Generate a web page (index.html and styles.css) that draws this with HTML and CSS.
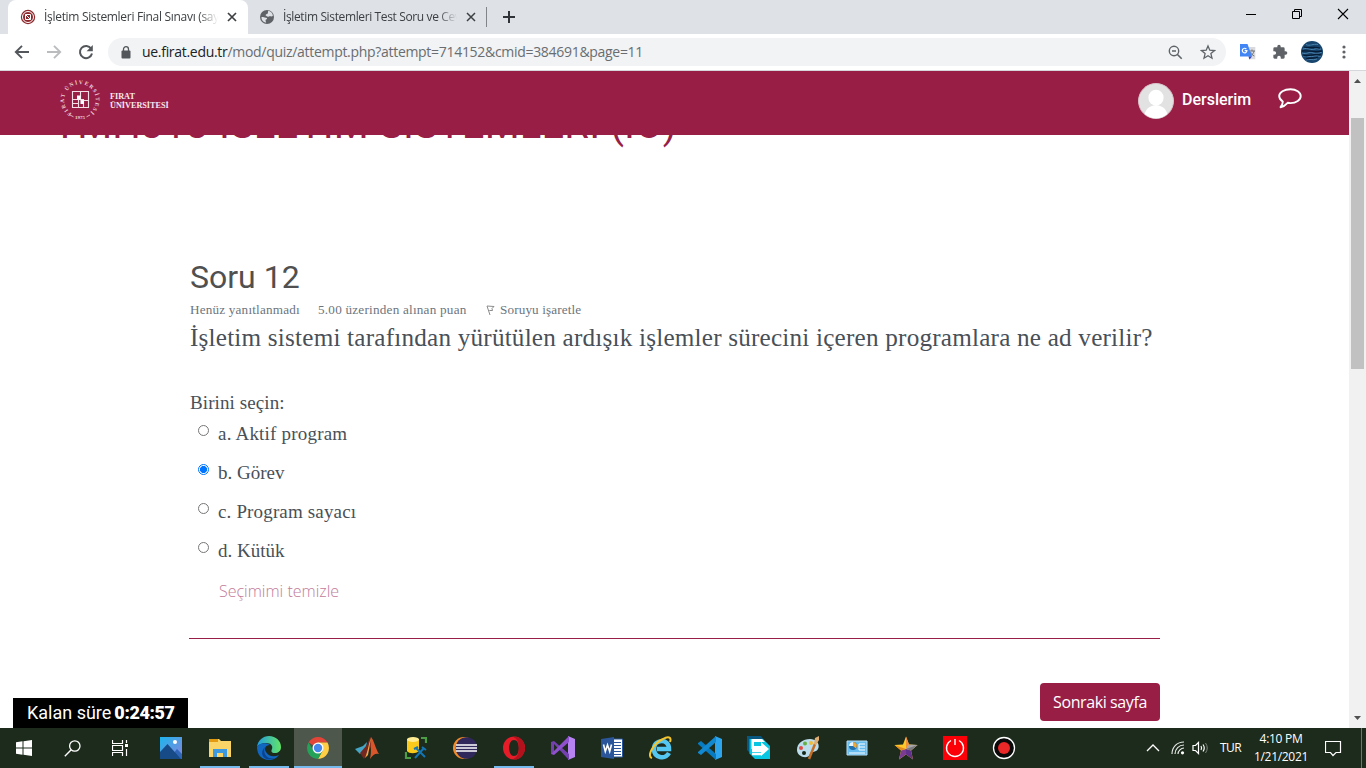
FILE: index.html
```html
<!DOCTYPE html>
<html lang="tr">
<head>
<meta charset="utf-8">
<title>İşletim Sistemleri Final Sınavı</title>
<link rel="stylesheet" href="styles.css">
</head>
<body>
<div class="tabs">
  <div class="tab active">
    <svg class="fav" width="16" height="16" viewBox="0 0 16 16"><circle cx="8" cy="8" r="7.200" fill="#8e2a2e"/><circle cx="8" cy="8" r="5.500" fill="none" stroke="#fff" stroke-width="1"/><path d="M5.500 5.500h5v5h-5zM5.500 5.500l5 5" fill="none" stroke="#fff" stroke-width="1"/></svg>
    <span class="tab-title t1">İşletim Sistemleri Final Sınavı (say</span>
    <svg class="close" width="12" height="12" viewBox="0 0 12 12"><path d="M2 2l8 8M10 2l-8 8" stroke="#3c4043" stroke-width="1.700"/></svg>
  </div>
  <div class="tab second">
    <svg class="fav" width="16" height="16" viewBox="0 0 16 16"><circle cx="8" cy="8" r="7" fill="#5f6368"/><path d="M2.500 8c1.800-.2 2.600.7 4.500.7 1.700 0 1.200 1.600 0 1.900-.9.300-.2 2.200.2 3-3-.2-5-2.700-4.700-5.600zM9.500 1.800c2.500.6 4.200 2.600 4.400 5-1.200 1.400-2.700-.2-4.100.8-1.600.8-2-.8-3.300-1.300.4-1.500 2.300-.8 2.400-2.200.1-.8 0-1.700.6-2.300z" fill="#dee1e6"/></svg>
    <span class="tab-title t2">İşletim Sistemleri Test Soru ve Cev</span>
    <svg class="close" width="12" height="12" viewBox="0 0 12 12"><path d="M2 2l8 8M10 2l-8 8" stroke="#3c4043" stroke-width="1.500"/></svg>
  </div>
  <i class="tab-sep"></i>
  <svg class="plus" width="14" height="14" viewBox="0 0 14 14"><path d="M7 1v12M1 7h12" stroke="#303438" stroke-width="2"/></svg>
  <div class="win">
    <svg width="12" height="12" viewBox="0 0 12 12"><path d="M1 6.500h10" stroke="#000"/></svg>
    <svg width="12" height="12" viewBox="0 0 12 12"><path d="M1.500 3.500h7v7h-7zM3.500 3.500v-2h7v7h-2" fill="none" stroke="#000"/></svg>
    <svg width="12" height="12" viewBox="0 0 12 12"><path d="M1 1l10 10M11 1L1 11" stroke="#000" stroke-width="1.100"/></svg>
  </div>
</div>
<div class="toolbar">
  <svg class="nav" width="16" height="16" viewBox="0 0 16 16"><path d="M15 8H2M8 1.800L1.800 8 8 14.200" fill="none" stroke="#53575b" stroke-width="1.900"/></svg>
  <svg class="nav" width="16" height="16" viewBox="0 0 16 16"><path d="M1 8h13M8 1.800L14.200 8 8 14.200" fill="none" stroke="#babcbe" stroke-width="1.900"/></svg>
  <svg class="nav" width="16" height="16" viewBox="0 0 16 16"><path d="M13.200 4.700A6.100 6.100 0 1 0 14 9.500" fill="none" stroke="#53575b" stroke-width="2"/><path d="M14.800 1v6.200H8.600z" fill="#53575b"/></svg>
  <div class="omni">
    <svg width="10" height="13" viewBox="0 0 10 13"><rect x=".5" y="4.500" width="9" height="8" rx="1" fill="#53575b"/><path d="M2.500 5V3.200a2.500 2.500 0 0 1 5 0V5" fill="none" stroke="#53575b" stroke-width="1.300"/></svg>
    <span class="url"><b>ue.firat.edu.tr</b>/mod/quiz/attempt.php?attempt=714152&amp;cmid=384691&amp;page=11</span>
    <svg class="mag" width="15" height="15" viewBox="0 0 15 15"><circle cx="6" cy="6" r="4.700" fill="none" stroke="#5f6368" stroke-width="1.400"/><path d="M4 6h4M9.200 9.200l4.500 4.500" stroke="#5f6368" stroke-width="1.600"/></svg>
    <svg width="16" height="16" viewBox="0 0 16 16"><path d="M8 1.900l1.800 4.300 4.700.4-3.600 3 1.100 4.600L8 11.800l-4 2.400 1.100-4.600-3.600-3 4.700-.4z" fill="none" stroke="#5f6368" stroke-width="1.300"/></svg>
  </div>
  <svg class="gt" width="16" height="16" viewBox="0 0 16 16"><path d="M7 3h8.300v12.300H9z" fill="#d8dadd"/><path d="M9.500 7h5.500M12 5.500V7M14 7c-.5 2.500-2 3.800-3.500 4.800M10.500 8c.8 2 2 3.200 3.800 4" stroke="#70757a" fill="none"/><path d="M0 0h7.500L12 12.500H0z" fill="#4285f4"/><path d="M8.500 12.500H12l-2.500 3z" fill="#3442c4"/><path d="M6.300 5A2.300 2.300 0 1 0 6.900 6.700H4.700" fill="none" stroke="#fff" stroke-width="1.200"/></svg>
  <svg class="puz" width="16" height="16" viewBox="0 0 24 24"><path d="M20.500 11H19V7a2 2 0 0 0-2-2h-4V3.500a2.500 2.500 0 0 0-5 0V5H4a2 2 0 0 0-2 2v3.800h1.500a2.700 2.700 0 0 1 0 5.400H2V20c0 1.100.9 2 2 2h3.800v-1.500a2.700 2.700 0 0 1 5.400 0V22H17a2 2 0 0 0 2-2v-4h1.500a2.500 2.500 0 0 0 0-5z" fill="#5f6368"/></svg>
  <svg class="ava" width="22" height="22" viewBox="0 0 22 22"><circle cx="11" cy="11" r="11" fill="#17456d"/><path d="M5 3.500c4 2 7-1 12 0M2 8c5-2 8 2 12 0 3-1 4 1 6 0M1 12c5 2 7-2 11 0 4 1 6 0 9-1M2 15c5-1 7 2 11 0 3-1 5 1 7 0M5 19c4-2 6 1 11-1" fill="none" stroke="#4c83ad" stroke-width="1"/><path d="M3 6c6 2 9-1 16 1M1 10c7-1 11 2 20 0M2 14c5 2 11-2 18 0M5 18c6-2 8 0 12-2" fill="none" stroke="#071c35" stroke-width="1.300"/></svg>
  <svg class="dots" width="4" height="14" viewBox="0 0 4 14"><g fill="#5f6368"><circle cx="2" cy="2" r="1.600"/><circle cx="2" cy="7" r="1.600"/><circle cx="2" cy="12" r="1.600"/></g></svg>
</div>
<div class="viewport">
  <div class="page">
    <header class="site">
      <svg class="seal" width="42" height="42" viewBox="0 0 42 42"><defs><path id="ring" d="M12.800 34.500A15.800 15.800 0 1 1 29.200 34.500"/></defs><text class="ring-text" textLength="79"><textPath href="#ring">FIRAT ÜNİVERSİTESİ</textPath></text><text class="year" x="21" y="39.800" text-anchor="middle">1975</text><path d="M11 36l3.500 1.800M31 36l-3.500 1.800" stroke="#e6c2ce" stroke-width=".9"/><path d="M13.500 12.500h16v16h-16zM21.500 12.500v8M13.500 20.500h11v8M29.500 21.500h-8M19.500 20.500v8M19.500 24.500h-6" fill="none" stroke="#f3dfe5" stroke-width="1.100"/><path d="M18 16.500h3.500v4H18zM21.500 21.500H25V25h-3.500z" fill="#fff"/></svg>
      <div class="brand"><span>FIRAT</span><span class="b2">ÜNİVERSİTESİ</span></div>
      <svg class="user" width="36" height="36" viewBox="0 0 36 36"><defs><clipPath id="uc"><circle cx="18" cy="18" r="17.300"/></clipPath></defs><circle cx="18" cy="18" r="17.500" fill="#e2e2e2" stroke="#d9c4cb"/><g clip-path="url(#uc)" fill="#fff"><ellipse cx="18" cy="14.700" rx="7.600" ry="8"/><path d="M6 36c0-9 5-13.500 12-14 7 .5 12 5 12 14z"/></g></svg>
      <span class="courses">Derslerim</span>
      <svg class="chat" width="24" height="21" viewBox="0 0 24 21"><path d="M12.500 1.200c5.800 0 10.200 3 10.200 6.900s-4.400 7-10.200 7c-1 0-1.900-.1-2.800-.3-2 2.200-4.300 3.900-7.200 4.400 1.600-1.600 2.300-3.300 2.300-5.600C2.800 12.300 1.200 10.400 1.200 8.100c0-3.900 4.900-6.900 11.300-6.900z" fill="none" stroke="#fff" stroke-width="1.900" stroke-linejoin="round"/></svg>
    </header>
    <h1><span>YMH313 İSLETİM SİSTEMLERİ (İÖ)</span></h1>
    <main class="question">
      <h2>Soru 12</h2>
      <div class="info"><span class="i1">Henüz yanıtlanmadı</span><span class="i2">5.00 üzerinden alınan puan</span><svg width="10" height="12" viewBox="0 0 10 12"><path d="M1 2l7 .5-2 2 .5 2H3.300M1 2l3 9" fill="none" stroke="#8a8c8e"/></svg><span class="i3">Soruyu işaretle</span></div>
      <p class="prompt">İşletim sistemi tarafından yürütülen ardışık işlemler sürecini içeren programlara ne ad verilir?</p>
      <div class="choose">Birini seçin:</div>
      <label class="opt"><i></i><span class="oa">a. Aktif program</span></label>
      <label class="opt"><i class="on"></i><span class="ob">b. Görev</span></label>
      <label class="opt"><i></i><span class="oc">c. Program sayacı</span></label>
      <label class="opt"><i></i><span class="od">d. Kütük</span></label>
      <a class="clear">Seçimimi temizle</a>
      <div class="next"><button>Sonraki sayfa</button></div>
    </main>
    <div class="timer"><span>Kalan süre</span><b>0:24:57</b></div>
  </div>
  <div class="scroll"><svg width="9" height="5" viewBox="0 0 9 5"><path d="M1 5l3.500-4L8 5z" fill="#505050"/></svg><i></i><svg width="9" height="5" viewBox="0 0 9 5"><path d="M1 0l3.500 4L8 0z" fill="#505050"/></svg></div>
</div>
<footer class="taskbar">
  <div class="sys"><svg width="16" height="16" viewBox="0 0 16 16"><path d="M0 2.200L6.500 1.300v6.200H0zM7.500 1.200L16 0v7.500H7.500zM0 8.500h6.500v6.200L0 13.800zM7.500 8.500H16V16l-8.500-1.200z" fill="#fff"/></svg></div>
  <div class="sys"><svg width="17" height="17" viewBox="0 0 17 17"><circle cx="10.800" cy="6" r="5.200" fill="none" stroke="#fff" stroke-width="1.300"/><path d="M7.200 9.800L.8 16.300" stroke="#fff" stroke-width="1.400"/></svg></div>
  <div class="sys"><svg width="17" height="16" viewBox="0 0 17 16"><path d="M.5 0v3.500h10V0M.5 16v-3.500h10V16M.5 5.500h10v5H.5zM14.500 0v3M14.500 9v7" fill="none" stroke="#fff" stroke-width="1.200"/><path d="M13 4h3v3h-3z" fill="#fff"/></svg></div>
  <div class="apps">
  <div><svg viewBox="0 0 24 24"><defs><linearGradient id="ph" x2="1" y2="1"><stop stop-color="#1cb5ec"/><stop offset="1" stop-color="#8b83dc"/></linearGradient></defs><path d="M1 1h22v22H1z" fill="url(#ph)"/><path d="M10 23l8-10 5 5v5z" fill="#2f66b8"/><path d="M1 16L8.500 8 22 23H1z" fill="#164b88"/><circle cx="16" cy="6" r="2" fill="#fff"/></svg></div>
  <div class="run"><svg viewBox="0 0 24 24"><path d="M1 3h10l2 2h10v16H1z" fill="#fbd468"/><path d="M1 3h9v3H1z" fill="#e39a10"/><path d="M5 21v-8h14v8h-4v-4H9v4z" fill="#3c99df"/></svg></div>
  <div class="run"><svg viewBox="0 0 24 24"><defs><linearGradient id="ed"><stop stop-color="#239ce0"/><stop offset="1" stop-color="#62e467"/></linearGradient></defs><path d="M0 11C1 4 6 0 12 0c7 0 12 5 12 11 0 4-3 6-6 6-4 0-4-2-3-4 1-3-1-6-6-6-4 0-7 1-9 4z" fill="url(#ed)"/><path d="M0 11c2-4 9-5 13-2-5 0-6 4-4 7 3 5 8 5 13 3-3 4-7 5-10 5C5 24 0 19 0 11z" fill="#1166c0"/><path d="M8 11c-3 7 3 13 10 11-10 5-17-4-10-11z" fill="#0b438d"/></svg></div>
  <div class="run current"><svg viewBox="0 0 24 24"><path d="M12 12L2.500 6.500A11 11 0 0 1 21.500 6.500H12z" fill="#e24438"/><path d="M21.500 6.500A11 11 0 0 1 12 23l4.800-8.500L12 6.500z" fill="#ffce44"/><path d="M2.500 6.500A11 11 0 0 0 12 23l4.500-8.500-9.300-.2z" fill="#24a25a"/><circle cx="12" cy="12" r="5.500" fill="#fff"/><circle cx="12" cy="12" r="4.200" fill="#4587ed"/></svg></div>
  <div><svg viewBox="0 0 24 24"><path d="M0 13l8-3 4-4-2 10-5 2z" fill="#45a5c6"/><path d="M5 17l6-7c2-2 3-8 5-9v10l-7 12z" fill="#722820"/><path d="M16 1c3 3 5 13 8 17-3-1-6 0-9 5 2-8 0-14 1-22z" fill="#d9562a"/><path d="M16 2c-2 4-3 13-6 20l3-3z" fill="#f9a546"/></svg></div>
  <div><svg viewBox="0 0 24 24"><path d="M3 3v12c2 3 9 3 12 0V3z" fill="#f9c91c"/><ellipse cx="9" cy="3.500" rx="6" ry="2.500" fill="#ffeb91"/><path d="M17 2h5v5M2 16v6h5" fill="none" stroke="#4d9c46" stroke-width="2.200"/><path d="M12 12l9 9M20 12L11 22M10 13l4-2M18 11l4 3" stroke="#1475b5" stroke-width="2"/></svg></div>
  <div><svg viewBox="0 0 24 24"><circle cx="11" cy="12" r="11" fill="#f58c28"/><circle cx="13.500" cy="12" r="10.800" fill="#30275b"/><path d="M3 9h21M3 12h21M3 15h21" stroke="#fff" stroke-width="1.700"/></svg></div>
  <div class="run"><svg viewBox="0 0 24 24"><path fill-rule="evenodd" d="M12 .5a11 11.500 0 1 0 0 23 11 11.500 0 1 0 0-23zM12 4c3 0 4.800 3.500 4.800 8s-1.800 8-4.800 8-4.800-3.500-4.800-8S9 4 12 4z" fill="#e61c29"/><path d="M15.500 1c4 1.200 7.500 5.500 7.500 11s-3.500 9.800-7.500 11c-1.500.4-3 .4-4-.5 4-1 5.300-5.500 5.300-10.500S15.500 2.500 11.500 1.500c1-.9 2.500-.9 4-.5z" fill="#b3121d"/></svg></div>
  <div><svg viewBox="0 0 24 24"><path d="M17 0l7 3v18l-7 3z" fill="#b783f1"/><path fill-rule="evenodd" d="M0 6l3-1 15 13v6L3 8v9l-3 1z" fill="#7440ae"/><path d="M0 18l3 1L18 6V0L3 15z" fill="#8e50cc"/></svg></div>
  <div><svg viewBox="0 0 24 24"><path d="M12 3h10.500v18H12z" fill="#fff" stroke="#2b579a"/><path d="M14 6.500h7M14 9.500h7M14 12.500h7M14 15.500h7M14 18.500h7" stroke="#2b579a"/><path d="M1 3l13-2v22L1 21z" fill="#2b579a"/><path d="M3.500 8.500L5.300 15.500 7.500 9 9.700 15.500l1.800-7" fill="none" stroke="#fff" stroke-width="1.600"/></svg></div>
  <div><svg viewBox="0 0 24 24"><path d="M20 17c-4 7-15 5-15-4C5 3 20 2 20 13H8" fill="none" stroke="#55c8f2" stroke-width="4.500"/><path d="M3 22C-3 20 5 7 14 3c5-3 9-2 7 3" fill="none" stroke="#f5c52d" stroke-width="2"/></svg></div>
  <div><svg viewBox="0 0 24 24"><path d="M17 0l7 3v18l-7 3z" fill="#2ca5ee"/><path d="M0 7l3-2 15 13v6L0 8z" fill="#087bc0"/><path d="M0 17l3 2L18 6V0L0 16z" fill="#1188d0"/></svg></div>
  <div><svg viewBox="0 0 24 24"><path d="M0 0h14l3 4v14H4l-4-4z" fill="#075781"/><path d="M2.500 3H16l7 7v13H8l-5.500-5.500z" fill="#08c6e1"/><path d="M4.500 3H15l3 3H7v4h7V6l8 7-8 7v-4H5v-3H4.500z" fill="#fff"/><path d="M5 18h10" stroke="#fff" stroke-width="2.500"/></svg></div>
  <div><svg viewBox="0 0 24 24"><path d="M1 14C1 7 7 3 14 3c9 0 11 9 6 12-4 2-5 0-6 3-2 6-13 3-13-4z" fill="#bcddec"/><circle cx="5" cy="12" r="2" fill="#e24b45"/><circle cx="9" cy="7.500" r="2" fill="#65af45"/><circle cx="15" cy="7" r="2" fill="#f0bd3b"/><circle cx="8" cy="17" r="2" fill="#172819"/><path d="M13 23l6-15" stroke="#c46d25" stroke-width="2.500"/><path d="M18 8l1-6 4-2v4l-3 5z" fill="#dfac72"/></svg></div>
  <div><svg viewBox="0 0 24 24"><path d="M2 5h20v14H2z" fill="#68bdf0" stroke="#b5dff5"/><circle cx="8" cy="10" r="4" fill="#2171ae"/><path d="M8 10V6a4 4 0 0 0-4 4z" fill="#e7f5ff"/><path d="M8 10V6a4 4 0 0 1 3 6.500z" fill="#f4aa32"/><path d="M14 8h6M14 11h6M14 14h6M4 17h16M14 8v6" stroke="#fff"/></svg></div>
  <div><svg viewBox="0 0 24 24"><path d="M12 0.500L9 8.500l-8.500.5 6.500 5.500L5 23.500l7-5 7 5-2-9 6.500-5.500-8.500-.5z" fill="#ffca28"/><path d="M12 .5l3 8-3 4.500z" fill="#f08f3c"/><path d="M15 8.500l8.500.5-6.500 5.500-5-1.500z" fill="#a7a7aa"/><path d="M17 14.500l2 9-7-5V13z" fill="#60308b"/><path d="M17 14.500l-5-1.500 11.500-4z" fill="#77777d"/><path d="M7 14.500l5-1.500v5.500l-7 5z" fill="#7c3b92"/><path d="M.5 9l11.500 4-5 1.500z" fill="#e58a22"/></svg></div>
  <div><svg viewBox="0 0 24 24"><path d="M0 0h24v24H0z" fill="#fb0006"/><path d="M8 4.500a8.500 8.500 0 1 0 8 0M12 3v6" fill="none" stroke="#fff" stroke-width="1.400"/></svg></div>
  <div><svg viewBox="0 0 24 24"><circle cx="12" cy="12" r="10.500" fill="#090909" stroke="#fff" stroke-width="1.300"/><circle cx="12" cy="12" r="6" fill="#eb2828"/></svg></div>
  </div>
  <div class="tray">
    <svg width="14" height="8" viewBox="0 0 14 8"><path d="M1 7l6-6 6 6" fill="none" stroke="#fff" stroke-width="1.300"/></svg>
    <svg class="wifi" width="14" height="14" viewBox="0 0 14 14"><path d="M1 13C1 6 6 1 13 1M4 13c0-5 4-9 9-9M7 13c0-3 3-6 6-6" fill="none" stroke="#e5e8e5" stroke-width="1.200"/><circle cx="11.500" cy="11.800" r="1.600" fill="#fff"/></svg>
    <svg class="vol" width="17" height="14" viewBox="0 0 17 14"><path d="M1 4.500h2.500L6.500 1.500v11l-3-3H1z" fill="none" stroke="#fff" stroke-width="1.200"/><path d="M9 5q1.200 2 0 4M11 3.500q2.500 3.500 0 7" fill="none" stroke="#fff" stroke-width="1.200"/><path d="M13.500 2q3.500 5 0 10" fill="none" stroke="#7d877d"/></svg>
    <span class="lang">TUR</span>
    <div class="clock"><span class="tm">4:10 PM</span><span class="dt">1/21/2021</span></div>
    <svg class="note" width="17" height="17" viewBox="0 0 17 17"><path d="M.5 1.500h15v11H11L8 15.500 5.500 12.500h-5z" fill="none" stroke="#fff" stroke-width="1.200"/></svg>
    <i class="peek"></i>
  </div>
</footer>
</body>
</html>
```
FILE: styles.css
```css
* { box-sizing: border-box; }
body { margin: 0; width: 1366px; height: 768px; overflow: hidden; background: #fff; font-family: "Open Sans", "Noto Sans", sans-serif; display: flex; flex-direction: column; }
svg { display: block; flex: none; }
span, b { white-space: nowrap; }
.tabs { height: 34px; flex: none; background: #dee1e6; display: flex; align-items: center; }
.tab { display: flex; align-items: center; height: 34px; flex: none; }
.active { width: 240px; margin-left: 8px; padding-left: 12px; background: #fff; border-radius: 8px 8px 0 0; }
.second { width: 237px; padding-left: 11px; }
.tab-title { font-size: 12px; color: #3c4043; width: 174px; margin: -1px 0 0 8px; overflow: hidden; -webkit-mask-image: linear-gradient(90deg, #000 155px, transparent 174px); }
.t1 { letter-spacing: -.3px; }
.t2 { letter-spacing: -.37px; }
.close { margin-left: 8px; }
.tab-sep { width: 1px; height: 20px; background: #80858a; margin-left: 1px; }
.plus { margin-left: 15px; }
.win { margin-left: auto; display: flex; gap: 34px; padding-right: 17px; margin-top: -6px; }
.toolbar { height: 37px; flex: none; background: #fff; border-bottom: 1px solid #d5d7da; display: flex; align-items: center; padding-left: 14px; }
.nav { margin-right: 16px; }
.omni { margin-left: -2px; width: 1118px; height: 28px; border-radius: 14px; background: #f1f3f4; display: flex; align-items: center; padding-left: 13px; }
.url { margin: -1px 0 0 11px; font-size: 14px; color: #696d71; letter-spacing: -.3px; }
.url b { font-weight: 400; color: #202124; }
.mag { margin-left: auto; margin-right: 17px; }
.omni > svg:last-child { margin-right: 10px; }
.gt { margin-left: 14px; }
.puz { margin-left: 16px; }
.ava { margin-left: 13px; }
.dots { margin-left: 19px; }
.viewport { height: 657px; flex: none; display: flex; }
.page { width: 1349px; position: relative; overflow: hidden; }
.site { position: relative; z-index: 2; height: 64px; background: #991e46; display: flex; align-items: center; padding-left: 59px; }
.seal { margin-top: -6px; }
.ring-text, .year { font-family: "Liberation Serif", serif; font-size: 5.500px; font-weight: 700; fill: #efd6de; }
.year { font-size: 5px; }
.brand { margin: -4px 0 0 9px; width: 59px; display: flex; flex-direction: column; font: 700 8.200px/9.500px "Liberation Serif", serif; color: #f8e9ee; }
.user { margin-left: 969px; margin-top: -4px; }
.courses { margin: -7px 0 0 8px; font: 500 16px/20px Roboto, sans-serif; color: #fff; width: 72px; }
.chat { margin: -9px 0 0 24px; }
h1 { margin: -32px 0 0 53px; height: 60px; font: 400 40px/44px Roboto, sans-serif; letter-spacing: .15px; color: #991e46; }
.question { margin: 94px 0 0 189px; width: 971px; color: #495057; font-family: "Liberation Serif", serif; }
h2 { margin: 0; padding: 0 0 0 1px; font: 400 32px/40px Roboto, sans-serif; color: #505050; }
.info { margin-top: 2px; height: 22px; padding-left: 1px; display: flex; align-items: center; font-size: 13.200px; color: #6c757d; letter-spacing: .18px; }
.i1 { width: 128px; }
.i2 { width: 168px; letter-spacing: .22px; }
.i3 { margin-left: 4px; letter-spacing: .12px; }
.prompt { margin: 3px 0 0 1px; font-size: 25.200px; line-height: 28px; letter-spacing: .2px; white-space: nowrap; }
.choose { margin: 39px 0 0 1px; font-size: 19px; line-height: 24px; letter-spacing: .1px; }
.opt { height: 39px; padding-left: 9px; display: flex; font-size: 19px; line-height: 39px; letter-spacing: .2px; }
.choose + .opt { margin-top: -1px; }
.oc { letter-spacing: .15px; }
.od, .ob { letter-spacing: 0; }
.opt i { width: 11px; height: 11px; border: 1px solid #767676; border-radius: 50%; margin: 11px 9px 0 0; }
.opt i.on { border-color: #0075ff; background: radial-gradient(circle, #0075ff 0 3.300px, #fff 3.800px); }
.clear { display: block; margin: 9px 0 0 30px; height: 24px; font: 300 16px/24px "Open Sans", sans-serif; color: #c27b99; }
.next { margin-top: 35px; border-top: 1px solid #991e46; padding-top: 44px; display: flex; justify-content: flex-end; }
button { width: 120px; height: 38px; border: 0; border-radius: 4px; background: #991e46; color: #fff; font: 400 16px/24px "Open Sans", sans-serif; padding: 0; letter-spacing: -.4px; white-space: nowrap; }
.timer { position: absolute; left: 13px; bottom: 0; width: 175px; height: 30px; background: #000; color: #fff; font: 400 18px/30px Roboto, sans-serif; padding-left: 14px; white-space: nowrap; }
.timer b { margin-left: 3px; font-weight: 900; letter-spacing: -.4px; }
.scroll { width: 17px; background: #f1f1f1; display: flex; flex-direction: column; align-items: center; padding: 7px 0; }
.scroll i { width: 13px; height: 251px; background: #c1c1c1; margin-top: 35px; margin-bottom: auto; }
.taskbar { height: 40px; flex: none; background: #1c2b1c; display: flex; }
.sys { width: 48px; display: grid; place-items: center; }
.apps { display: flex; margin-left: 2px; }
.apps > div { width: 49px; display: grid; place-items: center; }
.apps svg { width: 24px; height: 24px; }
.run { background: linear-gradient(#76b9ed, #76b9ed) 50% 100% / 40px 2px no-repeat; }
.current { background: linear-gradient(#76b9ed, #76b9ed) 50% 100% / 48px 2px no-repeat, linear-gradient(#4d574c, #4d574c) 50% 0 / 48px 40px no-repeat; }
.tray { margin-left: auto; display: flex; align-items: center; color: #fff; font-size: 12px; }
.wifi { margin-left: 11px; }
.vol { margin-left: 7px; }
.lang { margin-left: 11px; width: 22px; margin-top: -1px; letter-spacing: -.5px; }
.clock { margin-left: 11px; width: 56px; display: flex; flex-direction: column; align-items: center; line-height: 18px; letter-spacing: -.3px; }
.note { margin-left: 16px; margin-right: 19px; }
.peek { width: 1px; height: 40px; background: #6d776d; margin-right: 4px; }
```
